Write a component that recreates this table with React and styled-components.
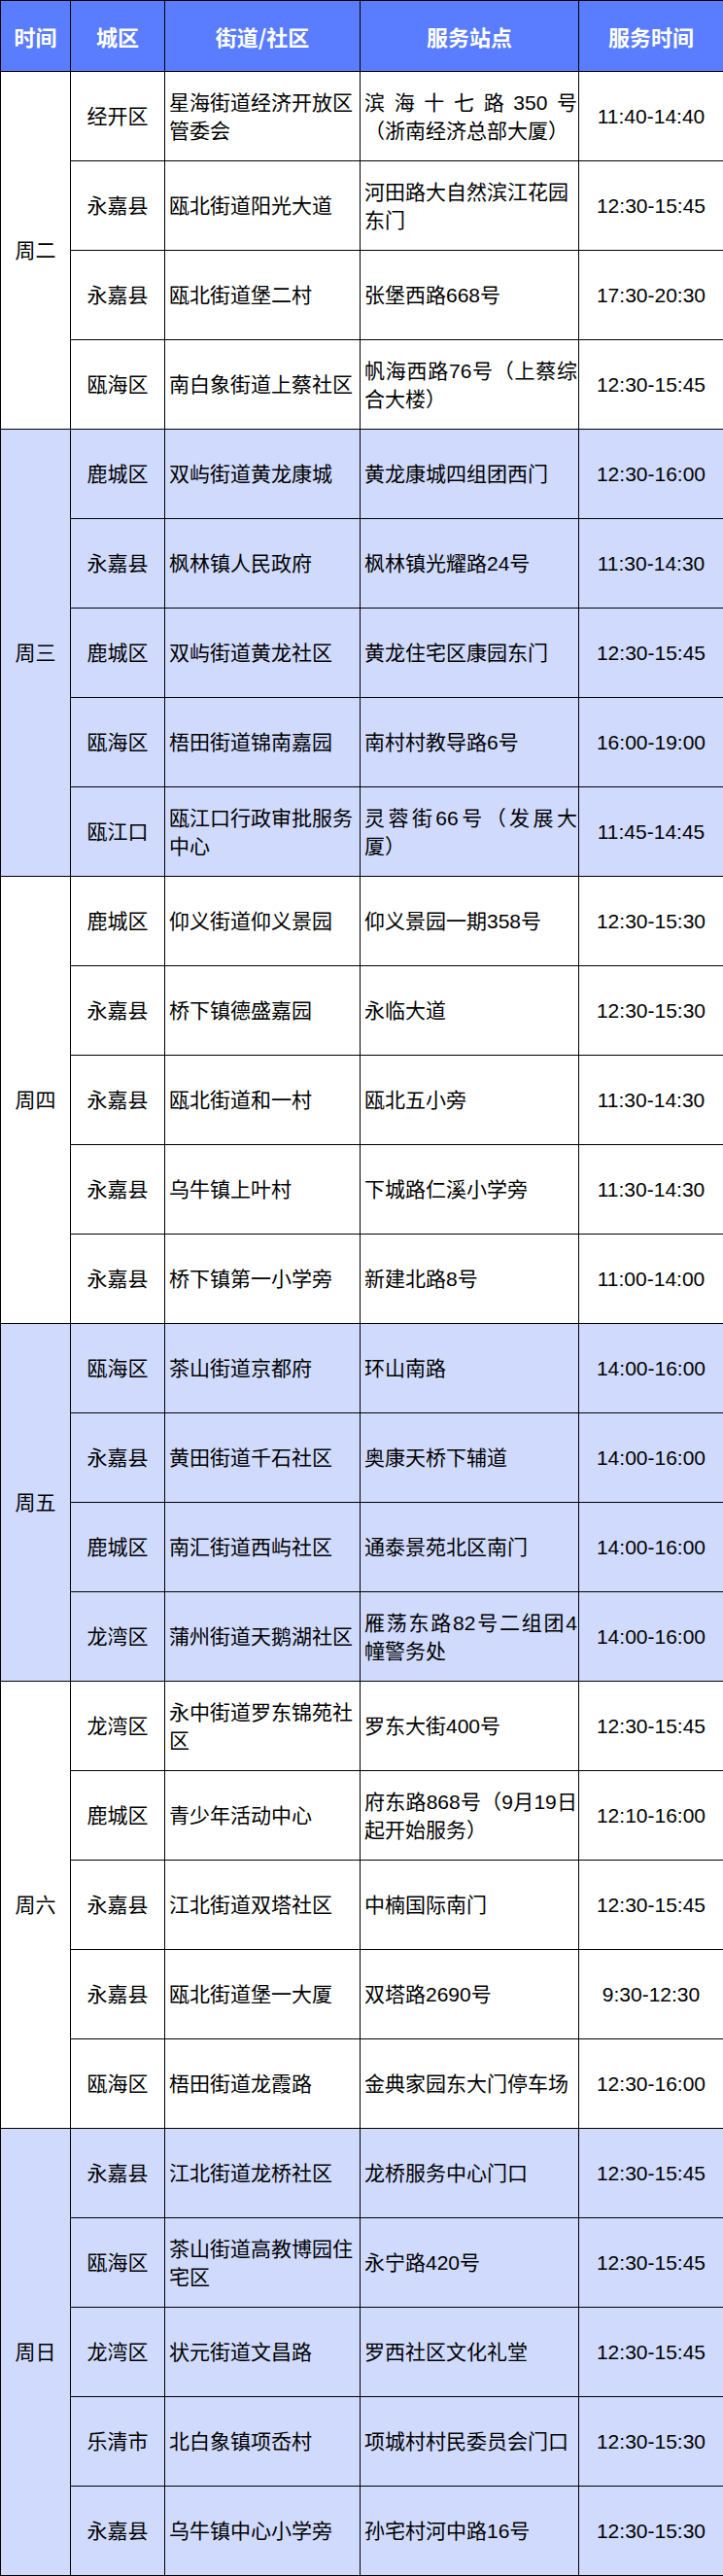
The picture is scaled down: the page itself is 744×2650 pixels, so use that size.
import React from 'react';
import styled, { createGlobalStyle } from 'styled-components';

const GlobalStyle = createGlobalStyle`
  html, body {
    margin: 0;
    padding: 0;
    background: #fff;
  }
`;

const Wrap = styled.div`
  width: 744px;
`;

const Table = styled.table`
  width: 744px;
  border-collapse: collapse;
  table-layout: fixed;
  font-family: "Liberation Sans", "Noto Sans CJK SC", sans-serif;
  font-size: 21px;
  line-height: 29px;
  color: #000;
`;

const HeadRow = styled.tr`
  height: 73px;
  background: #5a7cfe;
`;

const HeadCell = styled.th`
  border: 1px solid #000;
  padding: 0;
  color: #fff;
  font-family: "Noto Sans CJK SC", sans-serif;
  font-size: 22px;
  font-weight: 700;
  text-align: center;
  vertical-align: middle;
`;

const Row = styled.tr`
  height: 92px;
  background: ${({ $tone }) => ($tone === 'blue' ? '#d0dafd' : '#fff')};
`;

const Cell = styled.td`
  border: 1px solid #000;
  padding: ${({ $align }) => ($align === 'center' ? '0' : '0 1px 0 4px')};
  text-align: ${({ $align }) => $align || 'left'};
  vertical-align: middle;
  word-break: break-all;
`;

const Line = styled.span`
  display: block;
  text-align-last: ${({ $justify }) => ($justify ? 'justify' : 'auto')};
`;

const columns = [
  { title: '时间', width: 72 },
  { title: '城区', width: 97 },
  { title: '街道/社区', width: 201 },
  { title: '服务站点', width: 225 },
  { title: '服务时间', width: 149 },
];

const schedule = [
  {
    day: '周二',
    tone: 'white',
    rows: [
      ['经开区', ['星海街道经济开放区', '管委会'], ['滨海十七路350号', '（浙南经济总部大厦）'], '11:40-14:40'],
      ['永嘉县', '瓯北街道阳光大道', ['河田路大自然滨江花园', '东门'], '12:30-15:45'],
      ['永嘉县', '瓯北街道堡二村', '张堡西路668号', '17:30-20:30'],
      ['瓯海区', '南白象街道上蔡社区', ['帆海西路76号（上蔡综', '合大楼）'], '12:30-15:45'],
    ],
  },
  {
    day: '周三',
    tone: 'blue',
    rows: [
      ['鹿城区', '双屿街道黄龙康城', '黄龙康城四组团西门', '12:30-16:00'],
      ['永嘉县', '枫林镇人民政府', '枫林镇光耀路24号', '11:30-14:30'],
      ['鹿城区', '双屿街道黄龙社区', '黄龙住宅区康园东门', '12:30-15:45'],
      ['瓯海区', '梧田街道锦南嘉园', '南村村教导路6号', '16:00-19:00'],
      ['瓯江口', ['瓯江口行政审批服务', '中心'], ['灵蓉街66号（发展大', '厦）'], '11:45-14:45'],
    ],
  },
  {
    day: '周四',
    tone: 'white',
    rows: [
      ['鹿城区', '仰义街道仰义景园', '仰义景园一期358号', '12:30-15:30'],
      ['永嘉县', '桥下镇德盛嘉园', '永临大道', '12:30-15:30'],
      ['永嘉县', '瓯北街道和一村', '瓯北五小旁', '11:30-14:30'],
      ['永嘉县', '乌牛镇上叶村', '下城路仁溪小学旁', '11:30-14:30'],
      ['永嘉县', '桥下镇第一小学旁', '新建北路8号', '11:00-14:00'],
    ],
  },
  {
    day: '周五',
    tone: 'blue',
    rows: [
      ['瓯海区', '茶山街道京都府', '环山南路', '14:00-16:00'],
      ['永嘉县', '黄田街道千石社区', '奥康天桥下辅道', '14:00-16:00'],
      ['鹿城区', '南汇街道西屿社区', '通泰景苑北区南门', '14:00-16:00'],
      ['龙湾区', '蒲州街道天鹅湖社区', ['雁荡东路82号二组团4', '幢警务处'], '14:00-16:00'],
    ],
  },
  {
    day: '周六',
    tone: 'white',
    rows: [
      ['龙湾区', ['永中街道罗东锦苑社', '区'], '罗东大街400号', '12:30-15:45'],
      ['鹿城区', '青少年活动中心', ['府东路868号（9月19日', '起开始服务）'], '12:10-16:00'],
      ['永嘉县', '江北街道双塔社区', '中楠国际南门', '12:30-15:45'],
      ['永嘉县', '瓯北街道堡一大厦', '双塔路2690号', '9:30-12:30'],
      ['瓯海区', '梧田街道龙霞路', '金典家园东大门停车场', '12:30-16:00'],
    ],
  },
  {
    day: '周日',
    tone: 'blue',
    rows: [
      ['永嘉县', '江北街道龙桥社区', '龙桥服务中心门口', '12:30-15:45'],
      ['瓯海区', ['茶山街道高教博园住', '宅区'], '永宁路420号', '12:30-15:45'],
      ['龙湾区', '状元街道文昌路', '罗西社区文化礼堂', '12:30-15:45'],
      ['乐清市', '北白象镇项岙村', '项城村村民委员会门口', '12:30-15:30'],
      ['永嘉县', '乌牛镇中心小学旁', '孙宅村河中路16号', '12:30-15:30'],
    ],
  },
];

// wrapped lines in the station column are stretched like the original
const Text = ({ value, justify }) => {
  if (!Array.isArray(value)) return value;
  return value.map((line, i) => (
    <Line key={i} $justify={justify && i < value.length - 1}>
      {line}
    </Line>
  ));
};

const App = () => {
  return (
    <Wrap>
      <GlobalStyle />
      <Table>
        <colgroup>
          {columns.map((c) => (
            <col key={c.title} style={{ width: c.width }} />
          ))}
        </colgroup>
        <thead>
          <HeadRow>
            {columns.map((c) => (
              <HeadCell key={c.title}>{c.title}</HeadCell>
            ))}
          </HeadRow>
        </thead>
        <tbody>
          {schedule.map((group) =>
            group.rows.map(([district, street, station, time], i) => (
              <Row key={group.day + i} $tone={group.tone}>
                {i === 0 && (
                  <Cell $align="center" rowSpan={group.rows.length}>
                    {group.day}
                  </Cell>
                )}
                <Cell $align="center">{district}</Cell>
                <Cell>
                  <Text value={street} />
                </Cell>
                <Cell>
                  <Text value={station} justify={station !== '' && !String(station).startsWith('河田路')} />
                </Cell>
                <Cell $align="center">{time}</Cell>
              </Row>
            ))
          )}
        </tbody>
      </Table>
    </Wrap>
  );
};

export default App;
